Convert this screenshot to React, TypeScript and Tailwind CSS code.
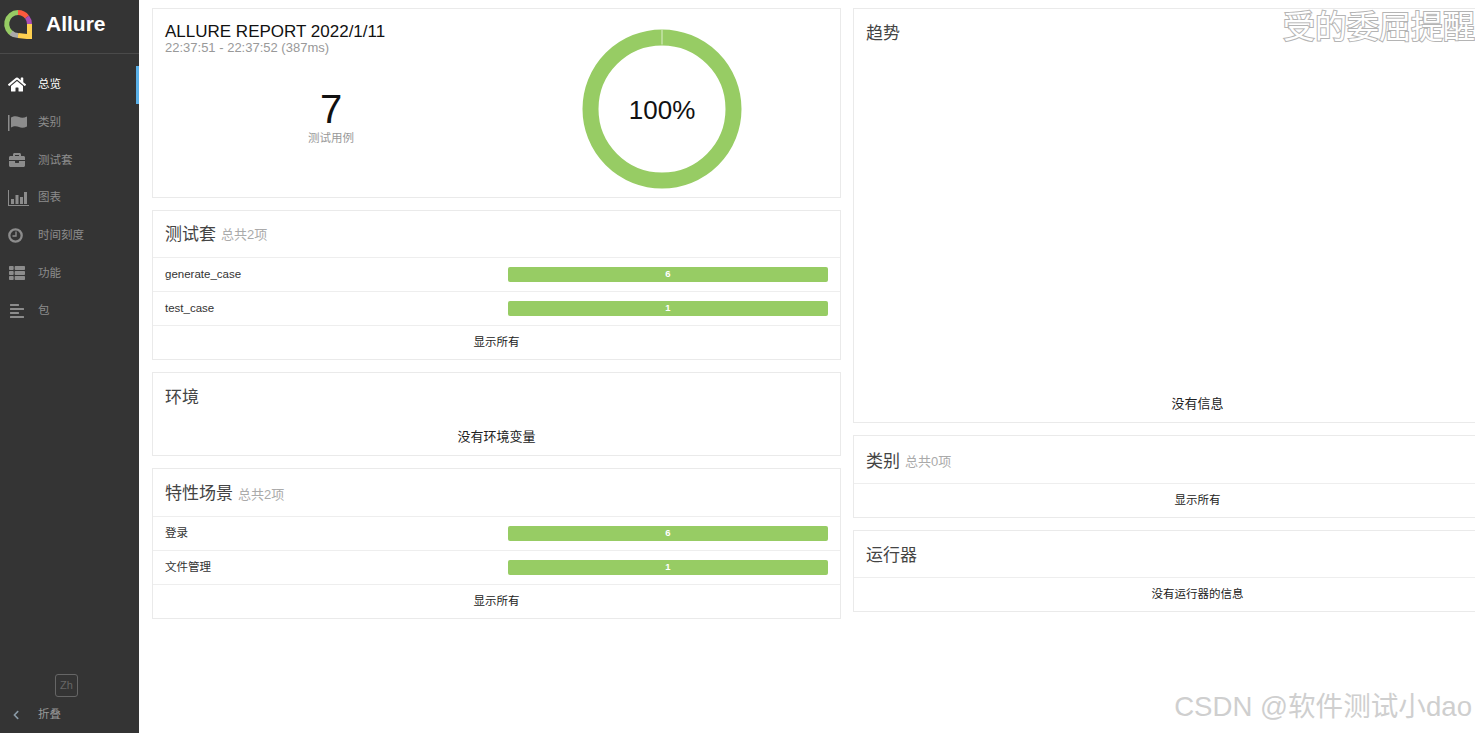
import type { ReactNode } from 'react';
import { FaAlignLeft, FaBriefcase, FaChevronLeft, FaHome, FaThList } from 'react-icons/fa';

const FONT = '[font-family:"Liberation_Sans","Noto_Sans_CJK_SC",sans-serif]';

function ChartIcon() {
  return (
    <svg viewBox="0 0 21 16" className="h-[16px] w-[21px]" fill="currentColor">
      <path d="M0 0h1v15h20v1H0z" />
      <path d="M3 9h3v5H3zM7.500 5h3v9h-3zM12 7h3v7h-3zM16 2h3v12h-3z" />
    </svg>
  );
}

function FlagIcon() {
  return (
    <svg viewBox="0 0 19 16" className="h-[16px] w-[19px]" fill="currentColor">
      <path d="M0 0h1.500v16H0z" />
      <path d="M3 2.500C6 0.500 9 1 11 2s5 1 8-0.500v10c-3 1.500-6 1.500-8 0.500s-5-1.500-8 0.500z" />
    </svg>
  );
}

function ClockIcon() {
  return (
    <svg viewBox="0 0 15 15" className="h-[15px] w-[15px]" fill="none" stroke="currentColor">
      <circle cx="7.500" cy="7.500" r="6.200" strokeWidth="2.300" />
      <path d="M8 3.500v4.500H4.500" strokeWidth="1.400" />
    </svg>
  );
}

function Logo() {
  // ring segments of the allure mark
  return (
    <svg viewBox="0 0 30 30" className="h-[30px] w-[30px]" fill="none" strokeWidth="5">
      <path d="M10.500 25.500A11.500 11.500 0 0 1 15 3.500" stroke="#97cc64" />
      <path d="M15 3.500A11.500 11.500 0 0 1 24 8" stroke="#fd5a3e" />
      <path d="M24 8A11.500 11.500 0 0 1 26.500 15" stroke="#aa4fb6" />
      <path d="M26.500 15V27.500H24L15 26.500" stroke="#ffd050" />
      <path d="M15 26.500A11.500 11.500 0 0 1 8 24" stroke="#aaaaaa" />
    </svg>
  );
}

const NAV = [
  { label: '总览', icon: <FaHome className="h-[17px] w-[18px]" />, active: true },
  { label: '类别', icon: <FlagIcon /> },
  { label: '测试套', icon: <FaBriefcase className="h-[16px] w-[18px]" /> },
  { label: '图表', icon: <ChartIcon /> },
  { label: '时间刻度', icon: <ClockIcon /> },
  { label: '功能', icon: <FaThList className="h-[16px] w-[18px]" /> },
  { label: '包', icon: <FaAlignLeft className="h-[16px] w-[18px]" /> },
];

function Sidebar() {
  return (
    <aside className="flex h-[733px] w-[139px] shrink-0 flex-col bg-[#343434] text-[#999]">
      <div className="flex h-[54px] items-center border-b border-[#4a4a4a] pb-[5px] pl-[3px]">
        <Logo />
        <span className="ml-[13px] text-[21px] font-bold text-white">Allure</span>
      </div>
      <nav className="mt-[12px] flex flex-col">
        {NAV.map((item) => (
          <div
            key={item.label}
            className={`flex h-[37.700px] items-center border-r-[3px] pl-[8px] text-[11.500px] ${
              item.active ? 'border-[#5ab0e8] text-white' : 'border-transparent text-[#8c8c8c]'
            }`}
          >
            <span className="flex w-[30px] justify-start">{item.icon}</span>
            {item.label}
          </div>
        ))}
      </nav>
      <div className="mt-auto flex flex-col pb-[9px]">
        <div className="ml-[55px] flex h-[23px] w-[23px] items-center justify-center rounded-[3px] border border-[#666] text-[11px] text-[#666]">
          Zh
        </div>
        <div className="mt-[9px] flex h-[18px] items-center pl-[11px] text-[11.500px]">
          <span className="flex w-[27px]">
            <FaChevronLeft className="h-[10px] w-[10px] text-[#8a9aa6]" />
          </span>
          折叠
        </div>
      </div>
    </aside>
  );
}

function Card({ children, className = '' }: { children: ReactNode; className?: string }) {
  return <section className={`border border-[#eaeaea] bg-white ${className}`}>{children}</section>;
}

function CardTitle({ title, note, className = 'h-[46px] pt-[3px]' }: { title: string; note?: string; className?: string }) {
  return (
    <div className={`flex items-center px-[12px] text-[17px] text-[#444] ${className}`}>
      {title}
      {note && <span className="ml-[5px] mt-[1px] text-[13px] text-[#aaa]">{note}</span>}
    </div>
  );
}

function BarRow({ name, count }: { name: string; count: number }) {
  return (
    <div className="flex h-[34px] items-center justify-between border-t border-[#eee] pl-[12px] pr-[12px] text-[11.500px] text-[#333]">
      <span>{name}</span>
      <div className="flex h-[15px] w-[320px] items-center justify-center rounded-[2px] bg-[#97cc64] text-[9.500px] font-bold text-white">
        {count}
      </div>
    </div>
  );
}

function FooterRow({ text }: { text: string }) {
  return (
    <div className="flex h-[34px] items-center justify-center border-t border-[#eee] text-[11.500px] text-[#222]">{text}</div>
  );
}

function Donut() {
  return (
    <svg viewBox="0 0 160 160" className="h-[160px] w-[160px]">
      <circle cx="80" cy="80" r="71.500" fill="none" stroke="#97cc64" strokeWidth="16" />
      <path d="M80 0.500v15" stroke="#dcefc9" strokeWidth="1" />
      <text x="80" y="90" textAnchor="middle" fontSize="26" fill="#111">
        100%
      </text>
    </svg>
  );
}

export default function App() {
  return (
    <div className={`relative flex h-[733px] w-[1475px] overflow-hidden bg-white ${FONT}`}>
      <Sidebar />
      <main className="flex items-start gap-[12px] pl-[13px] pt-[8px]">
        <div className="flex w-[689px] shrink-0 flex-col gap-[12px]">
          <Card className="h-[190px]">
            <div className="flex h-full">
              <div className="w-[344px] pl-[12px] pt-[13px]">
                <div className="text-[17px] leading-[19px] text-[#111]">ALLURE REPORT 2022/1/11</div>
                <div className="text-[13px] leading-[14px] text-[#999]">22:37:51 - 22:37:52 (387ms)</div>
                <div className="mt-[32px] flex flex-col items-center">
                  <div className="text-[40px] leading-[44px] text-[#111]">7</div>
                  <div className="text-[11.500px] leading-[14px] text-[#999]">测试用例</div>
                </div>
              </div>
              <div className="ml-[85px] pt-[20px]">
                <Donut />
              </div>
            </div>
          </Card>
          <Card>
            <CardTitle title="测试套" note="总共2项" className="h-[46px] pt-[1px]" />
            <BarRow name="generate_case" count={6} />
            <BarRow name="test_case" count={1} />
            <FooterRow text="显示所有" />
          </Card>
          <Card className="h-[84px]">
            <CardTitle title="环境" />
            <div className="mt-[3px] flex h-[30px] items-center justify-center text-[13px] text-[#222]">没有环境变量</div>
          </Card>
          <Card>
            <CardTitle title="特性场景" note="总共2项" className="h-[47px] pt-[3px]" />
            <BarRow name="登录" count={6} />
            <BarRow name="文件管理" count={1} />
            <FooterRow text="显示所有" />
          </Card>
        </div>
        <div className="flex w-[689px] shrink-0 flex-col gap-[12px]">
          <Card className="flex h-[415px] flex-col">
            <CardTitle title="趋势" />
            <div className="mt-auto flex h-[36px] items-center justify-center text-[13px] text-[#222]">没有信息</div>
          </Card>
          <Card>
            <CardTitle title="类别" note="总共0项" className="h-[47px] pt-[4px]" />
            <FooterRow text="显示所有" />
          </Card>
          <Card>
            <CardTitle title="运行器" />
            <FooterRow text="没有运行器的信息" />
          </Card>
        </div>
      </main>
      <div className='absolute right-[0px] top-[5px] text-[32px] font-normal leading-[38px] text-white [-webkit-text-stroke:2px_#b4b4b4] [paint-order:stroke] [font-family:"Noto_Sans_CJK_SC",sans-serif]'>
        受的委屈提醒
      </div>
      <div className="absolute right-[3px] top-[690px] text-[27.600px] font-normal leading-[34px] text-[#cfcfcf]">
        CSDN @软件测试小dao
      </div>
    </div>
  );
}
